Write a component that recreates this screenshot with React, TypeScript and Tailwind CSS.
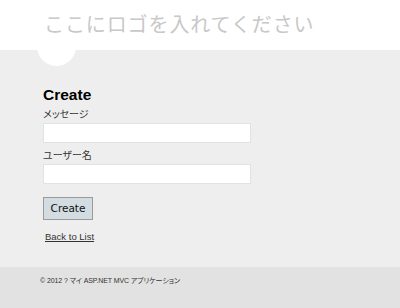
const jp = "font-['Noto_Sans_CJK_JP',sans-serif]";
const mixed = "font-['Liberation_Sans','Noto_Sans_CJK_JP',sans-serif]";

function Field({ label, first }: { label: string; first?: boolean }) {
  return (
    <div className={first ? 'mt-[4px]' : 'mt-[5px]'}>
      <label
        className={`block h-[13px] text-[10px] leading-[13px] text-[#333] [font-feature-settings:'palt'] ${jp}`}
      >
        {label}
      </label>
      <input
        type="text"
        className="mt-[3px] block h-[20px] w-[208px] border border-[#e2e2e2] bg-white px-1 text-[11px] outline-none"
      />
    </div>
  );
}

export default function App() {
  return (
    <div className="flex min-h-[308px] flex-col bg-[#e2e2e2] font-['Liberation_Sans',Arial,sans-serif]">
      <header className="relative z-10 h-[50px] bg-white pl-[44px] pt-[14px]">
        <p className={`text-[20px] leading-[20px] tracking-[0.9px] text-[#c8c8c8] ${jp}`}>
          ここにロゴを入れてください
        </p>
      </header>

      <main className="relative h-[217px] bg-[#efeeef] pl-[43px]">
        <div className="absolute left-[37px] top-[-23px] h-[39px] w-[39px] rounded-full bg-white" />
        <h1 className="relative mt-[37px] text-[15.5px] font-bold leading-[16px] text-black">Create</h1>
        <form onSubmit={(e) => e.preventDefault()}>
          <Field label="メッセージ" first />
          <Field label="ユーザー名" />
          <button
            type="submit"
            className="mt-[13px] h-[23px] w-[50px] border border-[#9a9a9a] bg-[#d3dce0] font-['DejaVu_Sans',sans-serif] text-[10.5px] text-[#111]"
          >
            Create
          </button>
        </form>
        <a href="#" className="mt-[11px] ml-[2px] block text-[9.5px] leading-[11px] text-[#333] underline">
          Back to List
        </a>
      </main>

      <footer
        className={`flex-1 pl-[40px] pt-[8px] text-[7px] leading-[12px] tracking-[-0.1px] text-[#333] [font-feature-settings:'palt'] ${mixed}`}
      >
        © 2012 ? マイ ASP.NET MVC アプリケーション
      </footer>
    </div>
  );
}
